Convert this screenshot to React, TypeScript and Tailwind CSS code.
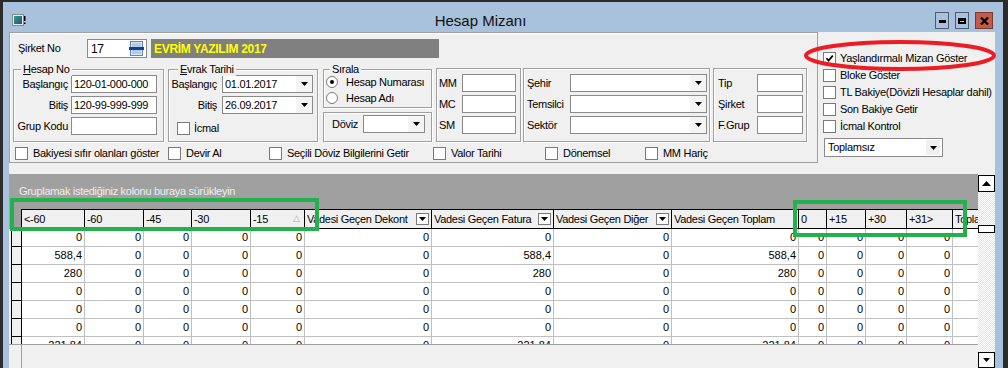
import React from "react";

const Arrow = () => (
  <svg width="7" height="4" viewBox="0 0 7 4">
    <path d="M0 0h7L3.5 4z" fill="#000" />
  </svg>
);

function Check({ checked }: { checked?: boolean }) {
  return (
    <span className="flex h-[13px] w-[13px] shrink-0 items-center justify-center border border-[#7a7a7a] bg-white">
      {checked && (
        <svg width="9" height="9" viewBox="0 0 9 9">
          <path d="M1.5 4.2 3.6 6.6 7.8 1.6" stroke="#000" strokeWidth="1.7" fill="none" />
        </svg>
      )}
    </span>
  );
}

function Radio({ on }: { on?: boolean }) {
  return (
    <span className="flex h-[12px] w-[12px] shrink-0 items-center justify-center rounded-full border border-[#7a7a7a] bg-white">
      {on && <span className="h-[4px] w-[4px] rounded-full bg-black" />}
    </span>
  );
}

function Field({ cls, value }: { cls: string; value?: string }) {
  return (
    <div className={`h-[18px] border border-[#8a8a8a] bg-white pl-[2px] leading-[16px] ${cls}`}>{value}</div>
  );
}

function Combo({ cls, value }: { cls: string; value?: string }) {
  return (
    <div className={`flex h-[18px] items-center border border-[#8a8a8a] bg-white ${cls}`}>
      <span className="flex-1 pl-[2px] leading-[16px]">{value}</span>
      <span className="flex h-full w-[16px] items-center justify-center bg-[#f4f4f4]">
        <Arrow />
      </span>
    </div>
  );
}

function Group({
  cls,
  legend,
  legendCls,
  children,
}: {
  cls: string;
  legend?: React.ReactNode;
  legendCls?: string;
  children: React.ReactNode;
}) {
  return (
    <div className={`relative shrink-0 border border-[#a0a0a0] shadow-[inset_1px_1px_0_#fff,1px_1px_0_#fff] ${cls}`}>
      {legend && (
        <span className={`absolute -top-[8px] bg-[#f0f0f0] px-[2px] leading-[14px] ${legendCls}`}>{legend}</span>
      )}
      {children}
    </div>
  );
}

const cols = [
  { t: "<-60", w: "w-[63px]" },
  { t: "-60", w: "w-[59px]" },
  { t: "-45", w: "w-[48px]" },
  { t: "-30", w: "w-[59px]" },
  { t: "-15", w: "w-[54px]", sort: true },
  { t: "Vadesi Geçen Dekont", w: "w-[127px]", dd: true },
  { t: "Vadesi Geçen Fatura", w: "w-[122px]", dd: true },
  { t: "Vadesi Geçen Diğer", w: "w-[118px]", dd: true },
  { t: "Vadesi Geçen Toplam", w: "w-[127px]" },
  { t: "0", w: "w-[28px]" },
  { t: "+15", w: "w-[39px]" },
  { t: "+30", w: "w-[41px]" },
  { t: "+31>", w: "w-[46px]" },
  { t: "Toplam", w: "w-[80px]" },
];

// last column (Toplam) is scrolled out of view, its values are not shown
const z = ["0", "0", "0", "0", "0", "0", "0", "0", "0", "0", "0", "0", "0", ""];
const rows = [
  z,
  ["588,4", "0", "0", "0", "0", "0", "588,4", "0", "588,4", "0", "0", "0", "0", ""],
  ["280", "0", "0", "0", "0", "0", "280", "0", "280", "0", "0", "0", "0", ""],
  z,
  z,
  z,
  ["221,84", "0", "0", "0", "0", "0", "221,84", "0", "221,84", "0", "0", "0", "0", ""],
];

const bottomChecks = [
  { t: "Bakiyesi sıfır olanları göster", w: "w-[153px]" },
  { t: "Devir Al", w: "w-[101px]" },
  { t: "Seçili Döviz Bilgilerini Getir", w: "w-[164px]" },
  { t: "Valor Tarihi", w: "w-[112px]" },
  { t: "Dönemsel", w: "w-[100px]" },
  { t: "MM Hariç", w: "w-[120px]" },
];

const sideChecks = [
  { t: "Yaşlandırmalı Mizan Göster", on: true },
  { t: "Bloke Göster" },
  { t: "TL Bakiye(Dövizli Hesaplar dahil)" },
  { t: "Son Bakiye Getir" },
  { t: "İcmal Kontrol" },
];

export default function App() {
  return (
    <div className="relative h-[368px] w-[1008px] overflow-hidden bg-[#2b2b2b] font-['Liberation_Sans',Arial,sans-serif] text-[11px] tracking-[-0.3px] text-black">
      <div className="ml-[3px] mt-[2px] flex h-[366px] w-[1000px] flex-col bg-[#a8c1dc] pl-[6px] pr-[8px]">
        {/* title bar */}
        <div className="flex h-[30px] shrink-0">
          <svg className="ml-[3px] mt-[12px]" width="14" height="12" viewBox="0 0 14 12">
            <rect x="0.5" y="0.5" width="11" height="11" fill="#e8e8e8" stroke="#8a8a8a" />
            <defs>
              <linearGradient id="ic" x1="0" y1="0" x2="1" y2="1">
                <stop offset="0" stopColor="#3aa070" />
                <stop offset="1" stopColor="#1d4f9c" />
              </linearGradient>
            </defs>
            <rect x="2" y="2" width="8" height="8" fill="url(#ic)" />
            <rect x="12" y="2" width="1.5" height="5" fill="#000" />
            <rect x="12" y="8.5" width="1.5" height="1.5" fill="#000" />
          </svg>
          <div className="flex-1 pt-[10px] text-center text-[15px] leading-[17px] tracking-normal text-[#111]">Hesap Mizanı</div>
          <div className="mr-[2px] mt-[10px] flex gap-[6px]">
            <div className="flex h-[17px] w-[14px] items-end justify-center border border-[#4f5b6c] pb-[5px]">
              <span className="h-[3px] w-[7px] bg-black" />
            </div>
            <div className="flex h-[17px] w-[14px] items-center justify-center border border-[#4f5b6c]">
              <span className="h-[6px] w-[8px] border-2 border-black border-t-[3px]" />
            </div>
            <div className="flex h-[17px] w-[18px] items-center justify-center border border-[#7a3a30] bg-[#c65a49]">
              <svg width="9" height="8" viewBox="0 0 9 8">
                <path d="M1 0.5 8 7.5M8 0.5 1 7.5" stroke="#000" strokeWidth="2.2" />
              </svg>
            </div>
          </div>
        </div>

        {/* content */}
        <div className="flex h-[336px] flex-col bg-[#f0f0f0]">
          <div className="flex h-[131px] shrink-0">
            {/* left panel */}
            <div className="flex h-full w-[809px] flex-col border border-[#a0a0a0] shadow-[inset_1px_1px_0_#fff]">
              <div className="mt-[6px] flex h-[19px] items-center">
                <span className="w-[77px] pl-[8px]">Şirket No</span>
                <div className="flex h-[19px] w-[60px] items-center border border-[#8a8a8a] bg-white pl-[3px]">
                  <span className="flex-1 text-[12px]">17</span>
                  <svg className="mr-[2px]" width="15" height="15" viewBox="0 0 15 15">
                    <rect x="1.5" y="0.5" width="12" height="14" fill="#d8e6f7" stroke="#5f86c4" />
                    <path d="M3 3h9M3 5h9M3 10h9M3 12h9" stroke="#8fb0dd" />
                    <rect x="0" y="6" width="15" height="3" fill="#1b3c8c" />
                  </svg>
                </div>
                <div className="ml-[4px] flex h-[19px] w-[288px] items-center bg-[#808080] pl-[3px] text-[12px] font-bold text-[#ffff00]">
                  EVRİM YAZILIM 2017
                </div>
              </div>

              <div className="mt-[10px] flex h-[74px] items-start pl-[3px]">
                <Group cls="mt-[1px] h-[73px] w-[151px]" legendCls="left-[7px]" legend={<><u>H</u>esap No</>}>
                  <div className="flex flex-col gap-[3px] pt-[5px]">
                    {[
                      ["Başlangıç", "120-01-000-000"],
                      ["Bitiş", "120-99-999-999"],
                      ["Grup Kodu", ""],
                    ].map(([l, v]) => (
                      <div key={l} className="flex h-[18px] items-center">
                        <span className="w-[54px] text-right">{l}</span>
                        <Field cls="ml-[3px] w-[86px]" value={v} />
                      </div>
                    ))}
                  </div>
                </Group>

                <Group cls="ml-[4px] mt-[1px] h-[73px] w-[150px]" legendCls="left-[9px]" legend={<><u>E</u>vrak Tarihi</>}>
                  <div className="flex flex-col gap-[3px] pt-[5px]">
                    {[
                      ["Başlangıç", "01.01.2017"],
                      ["Bitiş", "26.09.2017"],
                    ].map(([l, v]) => (
                      <div key={l} className="flex h-[18px] items-center">
                        <span className="w-[48px] text-right">{l}</span>
                        <Combo cls="ml-[5px] w-[91px]" value={v} />
                      </div>
                    ))}
                    <div className="mt-[4px] flex h-[14px] items-center gap-[4px] pl-[8px]">
                      <Check />
                      <span>İcmal</span>
                    </div>
                  </div>
                </Group>

                <div className="ml-[5px] mt-[1px] flex w-[109px] flex-col gap-[4px]">
                  <Group cls="h-[39px] w-[109px]" legendCls="left-[6px]" legend="Sırala">
                    <div className="flex flex-col pl-[2px] pt-[4px]">
                      <div className="flex h-[16px] items-center gap-[8px]">
                        <Radio on />
                        <span>Hesap Numarası</span>
                      </div>
                      <div className="flex h-[16px] items-center gap-[8px]">
                        <Radio />
                        <span>Hesap Adı</span>
                      </div>
                    </div>
                  </Group>
                  <Group cls="h-[30px] w-[109px]">
                    <div className="mt-[2px] flex h-[18px] items-center">
                      <span className="w-[39px] pl-[8px]">Döviz</span>
                      <Combo cls="w-[62px]" />
                    </div>
                  </Group>
                </div>

                <Group cls="ml-[4px] h-[74px] w-[85px]">
                  <div className="flex flex-col gap-[3px] pt-[5px]">
                    {["MM", "MC", "SM"].map((l) => (
                      <div key={l} className="flex h-[18px] items-center">
                        <span className="w-[25px] pl-[2px]">{l}</span>
                        <Field cls="w-[54px]" />
                      </div>
                    ))}
                  </div>
                </Group>

                <Group cls="ml-[2px] h-[74px] w-[187px]">
                  <div className="flex flex-col gap-[3px] pt-[5px]">
                    {["Şehir", "Temsilci", "Sektör"].map((l) => (
                      <div key={l} className="flex h-[18px] items-center">
                        <span className="w-[46px] pl-[3px]">{l}</span>
                        <Combo cls="w-[137px]" />
                      </div>
                    ))}
                  </div>
                </Group>

                <Group cls="ml-[3px] h-[74px] w-[94px]">
                  <div className="flex flex-col gap-[3px] pt-[5px]">
                    {["Tip", "Şirket", "F.Grup"].map((l) => (
                      <div key={l} className="flex h-[18px] items-center">
                        <span className="w-[43px] pl-[4px]">{l}</span>
                        <Field cls="w-[46px]" />
                      </div>
                    ))}
                  </div>
                </Group>
              </div>

              <div className="mt-[4px] flex h-[14px] items-center pl-[5px]">
                {bottomChecks.map((c) => (
                  <div key={c.t} className={`flex shrink-0 items-center gap-[5px] ${c.w}`}>
                    <Check />
                    <span className="whitespace-nowrap">{c.t}</span>
                  </div>
                ))}
              </div>
            </div>

            {/* right panel */}
            <div className="flex flex-1 flex-col pl-[5px] pt-[18px]">
              {sideChecks.map((c) => (
                <div key={c.t} className="flex h-[17px] items-center gap-[4px]">
                  <Check checked={c.on} />
                  <span className="whitespace-nowrap">{c.t}</span>
                </div>
              ))}
              <div className="ml-[1px] mt-[3px] flex h-[19px] w-[119px] items-center border border-[#8a8a8a] bg-white">
                <span className="flex-1 pl-[3px]">Toplamsız</span>
                <span className="mr-[2px] flex h-[15px] w-[14px] items-center justify-center bg-[#f0f0f0]">
                  <Arrow />
                </span>
              </div>
            </div>
          </div>

          <div className="h-[11px] shrink-0" />

          {/* grid */}
          <div className="flex flex-1">
            <div className="flex w-[969px] flex-col overflow-hidden">
              <div className="flex h-[35px] shrink-0 items-center bg-[#a0a0a0] pl-[10px] text-[#eeeeee]">
                Gruplamak istediğiniz kolonu buraya sürükleyin
              </div>
              <div className="flex h-[20px] shrink-0 bg-[#a0a0a0]">
                <div className="w-[13px] shrink-0 border-r border-black" />
                {cols.map((c) => (
                  <div
                    key={c.t}
                    className={`flex shrink-0 items-center overflow-hidden border-y border-r border-black bg-[#f0f0f0] pl-[2px] ${c.w}`}
                  >
                    <span className="flex-1 overflow-hidden whitespace-nowrap">{c.t}</span>
                    {c.sort && <span className="mr-[4px] text-[9px] text-[#a8a8a8]">△</span>}
                    {c.dd && (
                      <span className="mr-[2px] flex h-[12px] w-[13px] shrink-0 items-center justify-center border border-[#7a7a7a] bg-white">
                        <Arrow />
                      </span>
                    )}
                  </div>
                ))}
              </div>
              <div className="h-[115px] shrink-0 overflow-hidden bg-white tracking-normal">
                {rows.map((r, i) => (
                  <div key={i} className="flex h-[18px]">
                    <div className="w-[13px] shrink-0 bg-[#f0f0f0] pl-[2px]">
                      <div className="h-full border-x border-b border-black" />
                    </div>
                    {cols.map((c, j) => (
                      <div
                        key={c.t}
                        className={`shrink-0 border-b border-r border-[#c0c0c0] pr-[2px] text-right leading-[17px] ${c.w}`}
                      >
                        {r[j]}
                      </div>
                    ))}
                  </div>
                ))}
              </div>
              <div className="flex flex-1 border-t border-[#a0a0a0]">
                <div className="w-[13px] border-r border-[#a0a0a0]" />
              </div>
            </div>

            {/* scrollbar */}
            <div className="flex w-[17px] flex-col pt-[1px]">
              <div className="flex h-[17px] shrink-0 items-center justify-center border border-black bg-white">
                <svg width="9" height="5" viewBox="0 0 9 5">
                  <path d="M0 5h9L4.5 0z" fill="#000" />
                </svg>
              </div>
              <div className="flex-1 bg-[repeating-conic-gradient(#e4e4e4_0%_25%,#ffffff_0%_50%)] bg-[length:2px_2px]">
                <div className="mt-[33px] h-[8px] border border-black bg-white" />
              </div>
              <div className="flex h-[16px] shrink-0 items-center justify-center border border-black bg-white">
                <Arrow />
              </div>
            </div>
          </div>
        </div>
      </div>

      {/* annotations */}
      <div className="absolute left-[10px] top-[198px] h-[33px] w-[309px] border-4 border-[#22b14c]" />
      <div className="absolute left-[793px] top-[200px] h-[37px] w-[174px] border-4 border-[#22b14c]" />
      <svg className="absolute left-[800px] top-[36px]" width="200" height="40" viewBox="0 0 200 40">
        <ellipse cx="100" cy="19.5" rx="94" ry="13.5" fill="none" stroke="#ed1c24" strokeWidth="4" />
      </svg>
    </div>
  );
}
